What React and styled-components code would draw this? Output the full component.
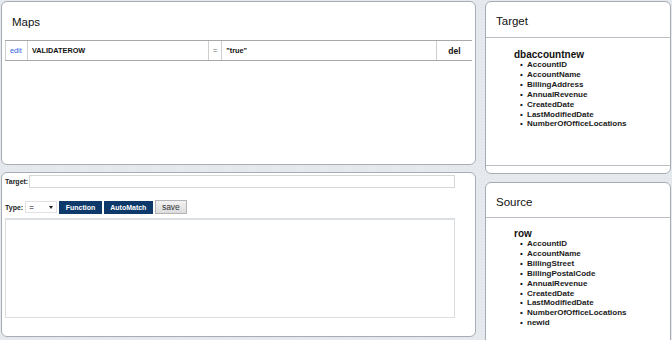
import styled, { createGlobalStyle } from 'styled-components';

const GlobalStyle = createGlobalStyle`
html, body {
  margin: 0;
  padding: 0;
  background: #e6eaee;
  font-family: "Liberation Sans", Arial, sans-serif;
}
`

const targetFields = ['AccountID', 'AccountName', 'BillingAddress', 'AnnualRevenue', 'CreatedDate', 'LastModifiedDate', 'NumberOfOfficeLocations'];
const sourceFields = ['AccountID', 'AccountName', 'BillingStreet', 'BillingPostalCode', 'AnnualRevenue', 'CreatedDate', 'LastModifiedDate', 'NumberOfOfficeLocations', 'newid'];

export default function App() {
    return (
        <>
            <GlobalStyle />
            <Page>
                <Column>
                    <Panel $height={164}>
                        <PanelTitle>Maps</PanelTitle>
                        <MapTable>
                            <tbody>
                                <tr>
                                    <EditCell>edit</EditCell>
                                    <Cell $bold style={{ width: 172 }}>VALIDATEROW</Cell>
                                    <OpCell>=</OpCell>
                                    <Cell $bold>"true"</Cell>
                                    <DelCell>del</DelCell>
                                </tr>
                            </tbody>
                        </MapTable>
                    </Panel>
                    <Panel $height={165}>
                        <EditorBody>
                            <FieldRow>
                                <Label>Target:</Label>
                                <TextInput />
                            </FieldRow>
                            <ToolRow>
                                <Label>Type:</Label>
                                <Select>
                                    <span>=</span>
                                    <Arrow />
                                </Select>
                                <DarkButton>Function</DarkButton>
                                <DarkButton>AutoMatch</DarkButton>
                                <SaveButton>save</SaveButton>
                            </ToolRow>
                            <TextArea />
                        </EditorBody>
                    </Panel>
                </Column>
                <Column $gap={8}>
                    <Panel $height={173}>
                        <SideHeader $h={36}>Target</SideHeader>
                        <Tree>
                            <TreeRoot>dbaccountnew</TreeRoot>
                            <FieldList>
                                {targetFields.map(f => <li key={f}>{f}</li>)}
                            </FieldList>
                        </Tree>
                        <Footer />
                    </Panel>
                    <Panel $height={170}>
                        <SideHeader $h={35}>Source</SideHeader>
                        <Tree $top={11}>
                            <TreeRoot>row</TreeRoot>
                            <FieldList>
                                {sourceFields.map(f => <li key={f}>{f}</li>)}
                            </FieldList>
                        </Tree>
                    </Panel>
                </Column>
            </Page>
        </>
    )
}

const Page = styled.div`
display: grid;
grid-template-columns: 475px 186px;
column-gap: 9px;
padding: 1px 0 0 1px;
width: 672px;
height: 340px;
overflow: hidden;
box-sizing: border-box;
background-color: #e6eaee;
background-image: radial-gradient(#dde2e7 0.6px, transparent 0.8px);
background-size: 3px 3px;
`
const Column = styled.div`
display: flex;
flex-direction: column;
gap: ${p => p.$gap || 7}px;
`
const Panel = styled.div`
position: relative;
display: flex;
flex-direction: column;
height: ${p => p.$height}px;
flex-shrink: 0;
box-sizing: border-box;
background: #fff;
border: 1px solid #a6adb5;
border-radius: 6px;
overflow: hidden;
`
const PanelTitle = styled.div`
font-size: 11.5px;
color: #111;
padding: 14px 0 0 10px;
height: 24px;
`
const MapTable = styled.table`
margin: 0 3px;
border-collapse: collapse;
font-size: 7.3px;
color: #111;
`
const Cell = styled.td`
height: 19px;
padding: 0 4px;
border-top: 1px solid #a8a8a8;
border-bottom: 1px solid #a8a8a8;
border-left: 1px solid #cfcfcf;
font-weight: ${p => p.$bold ? 'bold' : 'normal'};
`
const EditCell = styled(Cell)`
width: 13px;
color: #2f64e0;
`
const OpCell = styled(Cell)`
width: 4px;
color: #666;
`
const DelCell = styled(Cell)`
width: 27px;
text-align: center;
font-weight: bold;
font-size: 8.5px;
`
const EditorBody = styled.div`
display: flex;
flex-direction: column;
padding: 2px 20px 0 3px;
`
const FieldRow = styled.div`
display: flex;
align-items: center;
gap: 1px;
`
const Label = styled.span`
font-size: 7px;
font-weight: bold;
color: #222;
`
const TextInput = styled.div`
flex: 1;
height: 11px;
border: 1px solid #d6d6d6;
`
const ToolRow = styled.div`
display: flex;
align-items: center;
gap: 2px;
margin-top: 12px;
`
const Select = styled.div`
display: flex;
align-items: center;
justify-content: space-between;
box-sizing: border-box;
width: 32px;
height: 12px;
padding: 0 3px 0 3px;
font-size: 8px;
border: 1px solid #e2e2e2;
`
const Arrow = styled.span`
width: 0;
height: 0;
border-left: 2.5px solid transparent;
border-right: 2.5px solid transparent;
border-top: 3px solid #222;
`
const DarkButton = styled.div`
height: 13px;
padding: 0 6.5px;
line-height: 13px;
background: #0e3a6b;
color: #fff;
font-size: 7px;
font-weight: bold;
`
const SaveButton = styled.div`
height: 12px;
padding: 0 6px;
line-height: 12px;
background: linear-gradient(#f2f2f2, #dcdcdc);
border: 1px solid #b4b4b4;
color: #333;
font-size: 8.5px;
`
const TextArea = styled.div`
margin-top: 4px;
height: 97px;
border: 1px solid #dcdfe2;
border-top-width: 2px;
`
const SideHeader = styled.div`
height: ${p => p.$h}px;
box-sizing: border-box;
padding: 13px 0 0 10px;
font-size: 11.5px;
color: #111;
border-bottom: 1px solid #b8bec4;
`
const Tree = styled.div`
flex: 1;
padding: ${p => p.$top || 12}px 0 0 28px;
`
const TreeRoot = styled.div`
font-size: 10px;
font-weight: bold;
color: #111;
line-height: 10px;
`
const FieldList = styled.ul`
margin: 0;
padding: 0 0 0 13px;
font-size: 8px;
font-weight: bold;
color: #1a1a1a;
line-height: 9.9px;
list-style: none;

li::before {
  content: '•';
  display: inline-block;
  width: 7px;
  margin-left: -7px;
}
`
const Footer = styled.div`
height: 7px;
border-top: 1px solid #b8bec4;
`
